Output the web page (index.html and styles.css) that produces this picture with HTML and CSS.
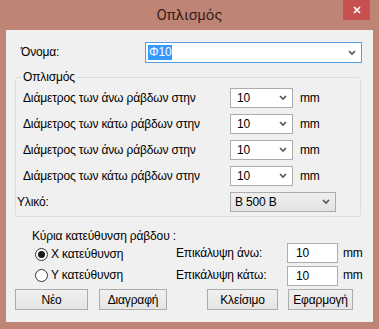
FILE: index.html
```html
<!DOCTYPE html>
<html lang="el">
<head>
  <meta charset="UTF-8">
  <title>Οπλισμός</title>
  <link rel="stylesheet" href="styles.css">
</head>
<body>
<div class="window">
  <div class="titlebar">
    <span></span>
    <span class="title">Οπλισμός</span>
    <div class="close-btn">
      <svg width="8" height="8" viewBox="0 0 8 8"><path d="M1 1 L7 7 M7 1 L1 7" stroke="#fff" stroke-width="1.7"/></svg>
    </div>
  </div>

  <div class="client">
    <div class="name-row">
      <span class="label">Όνομα:</span>
      <div class="combo combo--focus combo--name">
        <span class="selected">Φ10</span>
        <svg class="chev" width="8" height="6" viewBox="0 0 8 6"><path d="M1 1 L4 4 L7 1" stroke="#555" stroke-width="1.6" fill="none"/></svg>
      </div>
    </div>

    <fieldset class="group">
      <legend>Οπλισμός</legend>
      <div class="rows">
        <span class="label">Διάμετρος των άνω ράβδων στην</span>
        <div class="combo combo--small"><span>10</span><svg class="chev" width="8" height="6" viewBox="0 0 8 6"><path d="M1 1 L4 4 L7 1" stroke="#555" stroke-width="1.6" fill="none"/></svg></div>
        <span class="unit">mm</span>

        <span class="label">Διάμετρος των κάτω ράβδων στην</span>
        <div class="combo combo--small"><span>10</span><svg class="chev" width="8" height="6" viewBox="0 0 8 6"><path d="M1 1 L4 4 L7 1" stroke="#555" stroke-width="1.6" fill="none"/></svg></div>
        <span class="unit">mm</span>

        <span class="label">Διάμετρος των άνω ράβδων στην</span>
        <div class="combo combo--small"><span>10</span><svg class="chev" width="8" height="6" viewBox="0 0 8 6"><path d="M1 1 L4 4 L7 1" stroke="#555" stroke-width="1.6" fill="none"/></svg></div>
        <span class="unit">mm</span>

        <span class="label">Διάμετρος των κάτω ράβδων στην</span>
        <div class="combo combo--small"><span>10</span><svg class="chev" width="8" height="6" viewBox="0 0 8 6"><path d="M1 1 L4 4 L7 1" stroke="#555" stroke-width="1.6" fill="none"/></svg></div>
        <span class="unit">mm</span>

        <span class="label label--material">Υλικό:</span>
        <div class="combo combo--list"><span>B 500 B</span><svg class="chev" width="8" height="6" viewBox="0 0 8 6"><path d="M1 1 L4 4 L7 1" stroke="#555" stroke-width="1.6" fill="none"/></svg></div>
      </div>
    </fieldset>

    <div class="lower">
      <div class="direction">
        <div class="dir-title">Κύρια κατεύθυνση ράβδου :</div>
        <div class="radio-row"><span class="radio radio--on"></span>Χ κατεύθυνση</div>
        <div class="radio-row"><span class="radio"></span>Υ κατεύθυνση</div>
      </div>
      <div class="cover">
        <span class="label">Επικάλυψη άνω:</span>
        <div class="textbox">10</div>
        <span class="unit">mm</span>
        <span class="label">Επικάλυψη κάτω:</span>
        <div class="textbox">10</div>
        <span class="unit">mm</span>
      </div>
    </div>

    <div class="buttons">
      <div class="btn-group">
        <button class="btn btn--new">Νέο</button>
        <button class="btn btn--delete">Διαγραφή</button>
      </div>
      <div class="btn-group btn-group--right">
        <button class="btn btn--close">Κλείσιμο</button>
        <button class="btn btn--apply">Εφαρμογή</button>
      </div>
    </div>
  </div>
</div>
</body>
</html>
```

FILE: styles.css
```css
body {
  margin: 0;
  padding: 0;
  background: #be8475;
  font-family: "Liberation Sans", Arial, sans-serif;
  font-size: 12px;
  line-height: 15px;
  letter-spacing: -0.15px;
  color: #000;
}
.window {
  width: 379px;
  height: 329px;
}
.titlebar {
  height: 30px;
  display: grid;
  grid-template-columns: 1fr auto 1fr;
  align-items: start;
}
.title {
  font-family: Roboto, sans-serif;
  font-size: 15px;
  line-height: 30px;
  letter-spacing: 0;
  color: #3d1f19;
}
.close-btn {
  justify-self: end;
  margin-right: 9px;
  width: 27px;
  height: 20px;
  background: #c75050;
  display: flex;
  align-items: center;
  justify-content: center;
}
.client {
  margin: 0 6px;
  height: 292px;
  background: #f0f0f0;
  padding-top: 12px;
  box-sizing: border-box;
}
.name-row {
  display: flex;
  align-items: center;
  padding-left: 15px;
}
.name-row .label {
  width: 124px;
}
.combo {
  height: 20px;
  box-sizing: border-box;
  border: 1px solid #acacac;
  background: #fff;
  display: flex;
  align-items: center;
  justify-content: space-between;
  padding: 0 5px 0 6px;
}
.combo--name {
  width: 217px;
  height: 21px;
  padding-left: 2px;
}
.combo--focus {
  border-color: #569de5;
}
.selected {
  background: #3399ff;
  color: #fff;
  padding: 0 1px;
  line-height: 15px;
}
.combo--small {
  width: 63px;
}
.combo--list {
  width: 106px;
  background: linear-gradient(#efefef, #e3e3e3);
  padding-left: 4px;
  grid-column: 2 / 4;
}
.group {
  margin: 6px 12px 0 9px;
  padding: 0 0 4px 7px;
  border: 1px solid #dcdcdc;
  border-radius: 3px;
}
.group legend {
  margin-left: -2px;
  padding: 0 2px;
  line-height: 16px;
}
.rows {
  display: grid;
  grid-template-columns: 200px 63px auto;
  column-gap: 7px;
  row-gap: 6px;
  align-items: center;
  padding-top: 3px;
}
.label--material {
  margin-left: -6px;
}
.lower {
  display: flex;
  padding: 12px 0 0 26px;
}
.direction {
  width: 144px;
}
.dir-title {
  white-space: nowrap;
  line-height: 15px;
}
.radio-row {
  display: flex;
  align-items: center;
  gap: 3px;
  height: 21px;
  margin-left: 3px;
}
.radio {
  width: 11px;
  height: 11px;
  border: 1px solid #333;
  border-radius: 50%;
  background: #fff;
  position: relative;
}
.radio--on::after {
  content: "";
  position: absolute;
  left: 2px;
  top: 2px;
  width: 7px;
  height: 7px;
  border-radius: 50%;
  background: #1a1a1a;
}
.cover {
  display: grid;
  grid-template-columns: 106px 51px auto;
  column-gap: 5px;
  row-gap: 2px;
  align-items: center;
  margin-top: 14px;
}
.textbox {
  height: 20px;
  box-sizing: border-box;
  border: 1px solid #abadb3;
  background: #fff;
  padding-left: 8px;
  line-height: 18px;
}
.buttons {
  display: flex;
  justify-content: space-between;
  padding: 3px 20px 0 9px;
}
.btn-group {
  display: flex;
  gap: 11px;
}
.btn-group--right {
  gap: 10px;
}
.btn {
  height: 21px;
  padding: 0;
  font-family: inherit;
  font-size: 12px;
  letter-spacing: -0.15px;
  color: #000;
  border: 1px solid #acacac;
  background: linear-gradient(#f0f0f0, #e5e5e5);
}
.btn--new { width: 73px; }
.btn--delete { width: 68px; }
.btn--close { width: 71px; }
.btn--apply { width: 65px; }
```
